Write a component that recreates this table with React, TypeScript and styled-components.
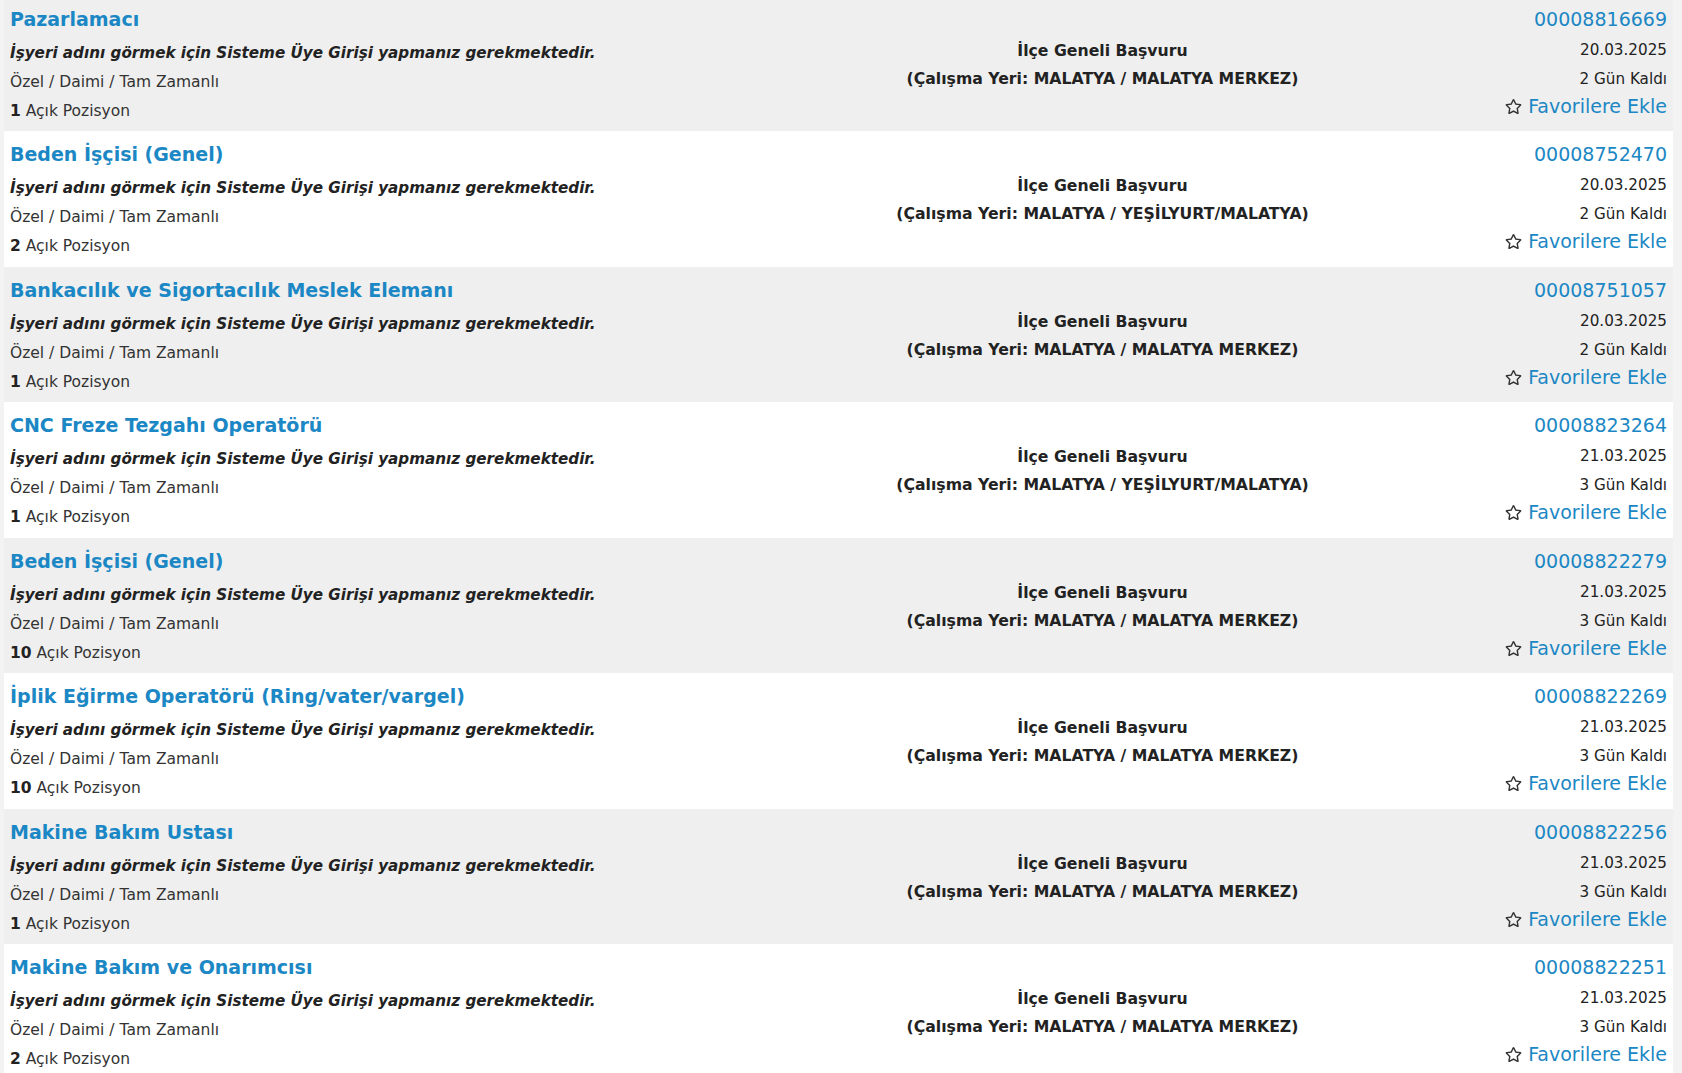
import { createGlobalStyle } from "styled-components";
import styled from "styled-components";
import { FaRegStar } from "react-icons/fa";

const GlobalStyle = createGlobalStyle`
  html, body {
    margin: 0;
    padding: 0;
    background: #f3f3f3;
    overflow: hidden;
  }
  body {
    font-family: "DejaVu Sans", Verdana, sans-serif;
    color: #222;
  }
`;

const List = styled.div`
  display: flex;
  flex-direction: column;
  margin: -4.5px 9px 0 4px;
`;

const Row = styled.div<{ $alt: boolean }>`
  display: grid;
  grid-template-columns: minmax(0, 1fr) 445px 342px;
  box-sizing: border-box;
  height: 135.5px;
  padding: 10px 6px 0 6px;
  background: ${(props) => (props.$alt ? "#efefef" : "#ffffff")};
`;

const LeftCol = styled.div`
  display: flex;
  flex-direction: column;
`;

const Title = styled.a`
  font-size: 19px;
  font-weight: bold;
  line-height: 26px;
  color: #1b87c4;
  text-decoration: none;
`;

const Notice = styled.div`
  margin-top: 7px;
  font-size: 15.2px;
  font-weight: bold;
  font-style: italic;
  line-height: 29px;
  color: #222;
`;

const Meta = styled.div`
  font-size: 15.5px;
  line-height: 29px;
  color: #333;

  b {
    font-weight: bold;
    color: #222;
  }
`;

const MiddleCol = styled.div`
  align-self: center;
  margin-top: -7px;
  text-align: center;
  font-size: 15.7px;
  font-weight: bold;
  line-height: 28px;
  color: #222;
`;

const RightCol = styled.div`
  display: flex;
  flex-direction: column;
  align-items: flex-end;
`;

const Code = styled.a`
  font-size: 19px;
  line-height: 26px;
  color: #1b87c4;
  text-decoration: none;
`;

const Info = styled.div<{ $first?: boolean }>`
  margin-top: ${(props) => (props.$first ? "4px" : "0")};
  font-size: 15.2px;
  line-height: 29px;
  color: #222;
`;

const FavLink = styled.a`
  display: flex;
  align-items: center;
  gap: 6px;
  margin-top: -2px;
  font-size: 19px;
  line-height: 29px;
  color: #1b87c4;
  text-decoration: none;

  svg {
    color: #333;
    width: 17px;
    height: 17px;
  }
`;

type Job = {
  title: string;
  code: string;
  date: string;
  days: number;
  open: number;
  place: string;
};

const jobs: Job[] = [
  { title: "Pazarlamacı", code: "00008816669", date: "20.03.2025", days: 2, open: 1, place: "MALATYA MERKEZ" },
  { title: "Beden İşçisi (Genel)", code: "00008752470", date: "20.03.2025", days: 2, open: 2, place: "YEŞİLYURT/MALATYA" },
  { title: "Bankacılık ve Sigortacılık Meslek Elemanı", code: "00008751057", date: "20.03.2025", days: 2, open: 1, place: "MALATYA MERKEZ" },
  { title: "CNC Freze Tezgahı Operatörü", code: "00008823264", date: "21.03.2025", days: 3, open: 1, place: "YEŞİLYURT/MALATYA" },
  { title: "Beden İşçisi (Genel)", code: "00008822279", date: "21.03.2025", days: 3, open: 10, place: "MALATYA MERKEZ" },
  { title: "İplik Eğirme Operatörü (Ring/vater/vargel)", code: "00008822269", date: "21.03.2025", days: 3, open: 10, place: "MALATYA MERKEZ" },
  { title: "Makine Bakım Ustası", code: "00008822256", date: "21.03.2025", days: 3, open: 1, place: "MALATYA MERKEZ" },
  { title: "Makine Bakım ve Onarımcısı", code: "00008822251", date: "21.03.2025", days: 3, open: 2, place: "MALATYA MERKEZ" },
];

export default function App() {
  return (
    <>
      <GlobalStyle />
      <List>
        {jobs.map((job, i) => (
          <Row key={job.code} $alt={i % 2 === 0}>
            <LeftCol>
              <Title href="#">{job.title}</Title>
              <Notice>İşyeri adını görmek için Sisteme Üye Girişi yapmanız gerekmektedir.</Notice>
              <Meta>Özel / Daimi / Tam Zamanlı</Meta>
              <Meta>
                <b>{job.open}</b> Açık Pozisyon
              </Meta>
            </LeftCol>
            <MiddleCol>
              İlçe Geneli Başvuru
              <br />
              (Çalışma Yeri: MALATYA / {job.place})
            </MiddleCol>
            <RightCol>
              <Code href="#">{job.code}</Code>
              <Info $first>{job.date}</Info>
              <Info>{job.days} Gün Kaldı</Info>
              <FavLink href="#">
                <FaRegStar />
                Favorilere Ekle
              </FavLink>
            </RightCol>
          </Row>
        ))}
      </List>
    </>
  );
}
